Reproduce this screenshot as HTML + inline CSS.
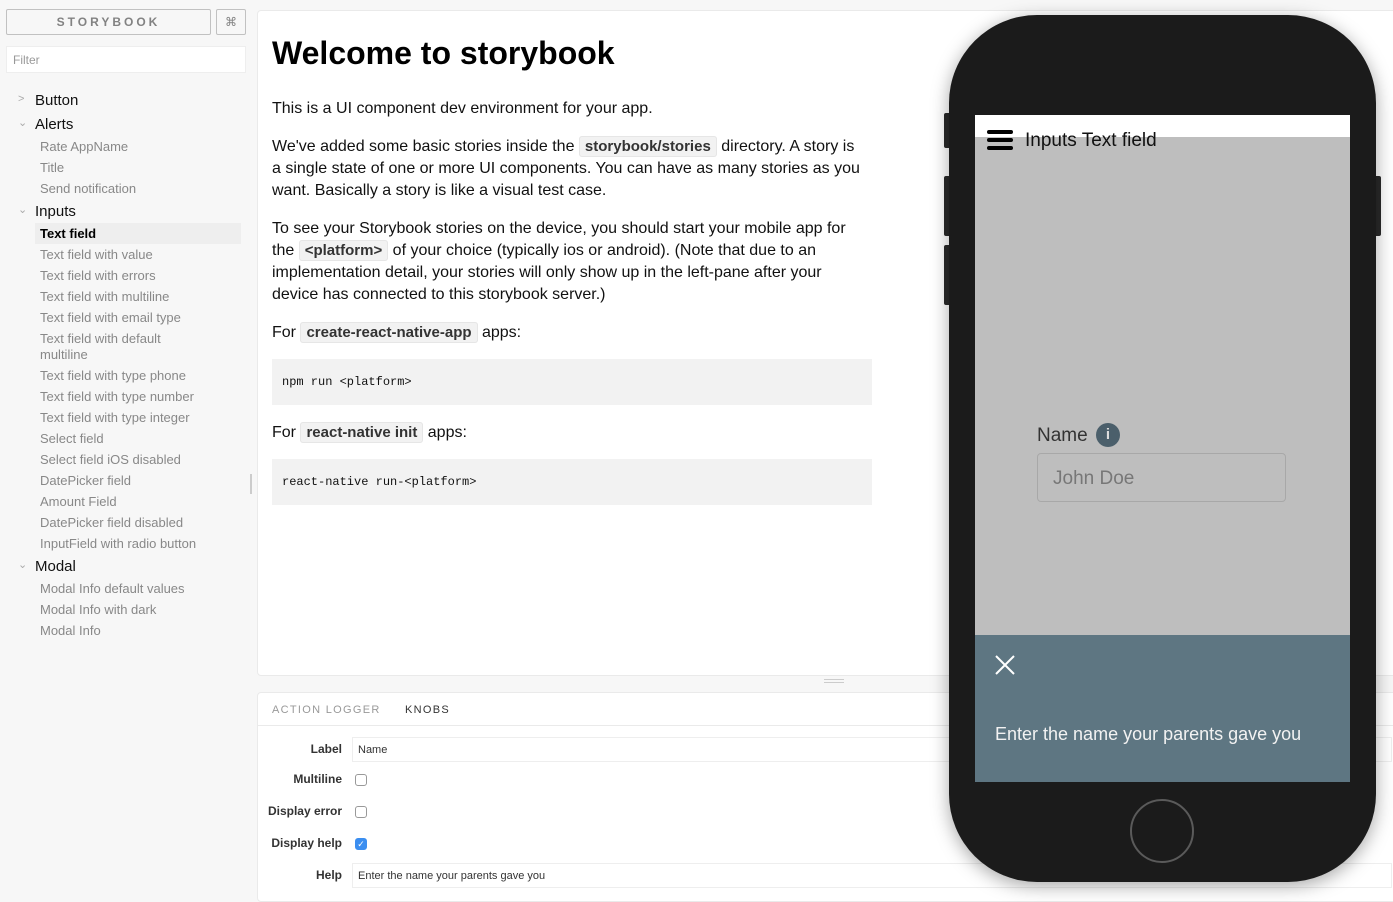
<!DOCTYPE html>
<html><head><meta charset="utf-8"><style>
*{box-sizing:border-box;margin:0;padding:0}
body{width:1393px;height:895px;overflow:hidden;background:#f7f7f7;font-family:"Liberation Sans",Arial,sans-serif;position:relative;color:#000}
.a{position:absolute;white-space:nowrap}
.sb{position:absolute;left:6px;top:9px;width:205px;height:26px;border:1px solid #c1c1c1;border-radius:2px;text-align:center;font-size:12px;letter-spacing:3px;font-weight:bold;color:#828282;line-height:25px}
.kb{position:absolute;left:216px;top:9px;width:30px;height:26px;border:1px solid #c1c1c1;border-radius:2px;text-align:center;font-size:12px;color:#828282;line-height:25px}
.flt{position:absolute;left:6px;top:46px;width:240px;height:27px;background:#fff;border:1px solid #eee;font-size:12px;color:#999;padding-left:6px;line-height:27px}
.t{font-size:15px;color:#111;left:35px}
.c{font-size:13px;color:#888;left:40px}
.ar{font-size:11px;color:#aaa;left:18px}
.main{position:absolute;left:257px;top:10px;width:1140px;height:666px;background:#fff;border:1px solid #eaeaea;border-radius:4px}
p.tx{position:absolute;left:272px;width:592px;font-size:16px;line-height:22px;color:#111}
code{background:#f2f2f2;border:1px solid #e6e6e6;border-radius:3px;font-family:"Liberation Sans",Arial,sans-serif;font-weight:bold;font-size:15px;color:#333;padding:1px 5px}
.pre{position:absolute;left:272px;width:600px;height:46px;background:#f2f2f2;font-family:"Liberation Mono",monospace;font-size:12px;line-height:46px;padding-left:10px;color:#111}
.bot{position:absolute;left:257px;top:692px;width:1140px;height:210px;background:#fff;border:1px solid #eaeaea;border-radius:4px}
.lb{font-size:12px;font-weight:bold;color:#333;right:1051px}
.inp{position:absolute;left:352px;width:1040px;height:25px;border:1px solid #eee;background:#fff;font-size:11px;color:#333;line-height:24px;padding-left:5px}
.cb{position:absolute;left:355px;width:12px;height:12px;border:1px solid #999;border-radius:3px;background:#fff}
</style></head><body>
<div class="sb">STORYBOOK</div><div class="kb">⌘</div>
<div class="flt">Filter</div>
<div class="a ar" style="top:93px">&gt;</div><div class="a t" style="top:92px">Button</div>
<div class="a ar" style="top:116px">⌄</div><div class="a t" style="top:116px">Alerts</div>
<div class="a c" style="top:139px">Rate AppName</div>
<div class="a c" style="top:160px">Title</div>
<div class="a c" style="top:181px">Send notification</div>
<div class="a ar" style="top:203px">⌄</div><div class="a t" style="top:203px">Inputs</div>
<div class="a" style="left:35px;top:223px;width:206px;height:21px;background:#eee"></div>
<div class="a c" style="top:226px;color:#000;font-weight:bold">Text field</div>
<div class="a c" style="top:247px">Text field with value</div>
<div class="a c" style="top:268px">Text field with errors</div>
<div class="a c" style="top:289px">Text field with multiline</div>
<div class="a c" style="top:310px">Text field with email type</div>
<div class="a c" style="top:331px">Text field with default</div>
<div class="a c" style="top:347px">multiline</div>
<div class="a c" style="top:368px">Text field with type phone</div>
<div class="a c" style="top:389px">Text field with type number</div>
<div class="a c" style="top:410px">Text field with type integer</div>
<div class="a c" style="top:431px">Select field</div>
<div class="a c" style="top:452px">Select field iOS disabled</div>
<div class="a c" style="top:473px">DatePicker field</div>
<div class="a c" style="top:494px">Amount Field</div>
<div class="a c" style="top:515px">DatePicker field disabled</div>
<div class="a c" style="top:536px">InputField with radio button</div>
<div class="a ar" style="top:558px">⌄</div><div class="a t" style="top:558px">Modal</div>
<div class="a c" style="top:581px">Modal Info default values</div>
<div class="a c" style="top:602px">Modal Info with dark</div>
<div class="a c" style="top:623px">Modal Info</div>
<div class="a" style="left:250px;top:474px;width:2px;height:20px;background:#ccc"></div>

<div class="main"></div>
<div class="a" style="left:272px;top:35px;font-size:32px;font-weight:bold">Welcome to storybook</div>
<p class="tx" style="top:98px">This is a UI component dev environment for your app.</p>
<p class="tx" style="top:136px">We've added some basic stories inside the <code>storybook/stories</code> directory. A story is a single state of one or more UI components. You can have as many stories as you want. Basically a story is like a visual test case.</p>
<p class="tx" style="top:218px">To see your Storybook stories on the device, you should start your mobile app for the <code>&lt;platform&gt;</code> of your choice (typically ios or android). (Note that due to an implementation detail, your stories will only show up in the left-pane after your device has connected to this storybook server.)</p>
<p class="tx" style="top:322px">For <code>create-react-native-app</code> apps:</p>
<div class="pre" style="top:359px">npm run &lt;platform&gt;</div>
<p class="tx" style="top:422px">For <code>react-native init</code> apps:</p>
<div class="pre" style="top:459px">react-native run-&lt;platform&gt;</div>
<div class="a" style="left:824px;top:679px;width:20px;height:1px;background:#ccc"></div>
<div class="a" style="left:824px;top:682px;width:20px;height:1px;background:#ccc"></div>

<div class="bot"></div>
<div class="a" style="left:257px;top:725px;width:1140px;height:1px;background:#eaeaea"></div>
<div class="a" style="left:272px;top:704px;font-size:11px;letter-spacing:1.3px;color:#999">ACTION LOGGER</div>
<div class="a" style="left:405px;top:704px;font-size:11px;letter-spacing:1.3px;color:#333">KNOBS</div>
<div class="a lb" style="top:742px">Label</div><div class="inp" style="top:737px">Name</div>
<div class="a lb" style="top:772px">Multiline</div><div class="cb" style="top:774px"></div>
<div class="a lb" style="top:804px">Display error</div><div class="cb" style="top:806px"></div>
<div class="a lb" style="top:836px">Display help</div><div class="cb" style="top:838px;background:#3b8ef0;border-color:#3b8ef0;color:#fff;font-size:9px;line-height:10px;text-align:center">✓</div>
<div class="a lb" style="top:868px">Help</div><div class="inp" style="top:863px">Enter the name your parents gave you</div>

<!-- phone -->
<div class="a" style="left:944px;top:113px;width:8px;height:35px;background:#2a2a2a;border-radius:2px"></div>
<div class="a" style="left:944px;top:176px;width:8px;height:60px;background:#2a2a2a;border-radius:2px"></div>
<div class="a" style="left:944px;top:245px;width:8px;height:60px;background:#2a2a2a;border-radius:2px"></div>
<div class="a" style="left:1373px;top:176px;width:8px;height:60px;background:#2a2a2a;border-radius:2px"></div>
<div class="a" style="left:949px;top:15px;width:427px;height:867px;background:#1b1b1b;border-radius:88px;box-shadow:0 4px 18px rgba(0,0,0,.35)"></div>
<div class="a" style="left:975px;top:115px;width:375px;height:22px;background:#fff"></div>
<div class="a" style="left:975px;top:137px;width:375px;height:498px;background:#bebebe"></div>
<div class="a" style="left:987px;top:130px;width:26px;height:4px;background:#000;border-radius:2px"></div>
<div class="a" style="left:987px;top:138px;width:26px;height:4px;background:#000;border-radius:2px"></div>
<div class="a" style="left:987px;top:146px;width:26px;height:4px;background:#000;border-radius:2px"></div>
<div class="a" style="left:1025px;top:130px;font-size:19px;color:#111">Inputs Text field</div>
<div class="a" style="left:1037px;top:425px;font-size:19px;color:#333">Name</div>
<div class="a" style="left:1096px;top:423px;width:24px;height:24px;border-radius:50%;background:#4b5f6b;color:#ddd;font-size:15px;font-weight:bold;text-align:center;line-height:24px">i</div>
<div class="a" style="left:1037px;top:453px;width:249px;height:49px;border:1px solid #a8a8a8;border-radius:4px;font-size:19px;color:#777;line-height:49px;padding-left:15px">John Doe</div>
<div class="a" style="left:975px;top:635px;width:375px;height:147px;background:#5e7682"></div>
<svg class="a" style="left:995px;top:655px" width="20" height="20"><path d="M1 1L19 19M19 1L1 19" stroke="#fff" stroke-width="2"/></svg>
<div class="a" style="left:995px;top:724px;font-size:18px;color:#f2f2f2">Enter the name your parents gave you</div>
<div class="a" style="left:1130px;top:799px;width:64px;height:64px;border:2px solid #5a5a5a;border-radius:50%"></div>
</body></html>
